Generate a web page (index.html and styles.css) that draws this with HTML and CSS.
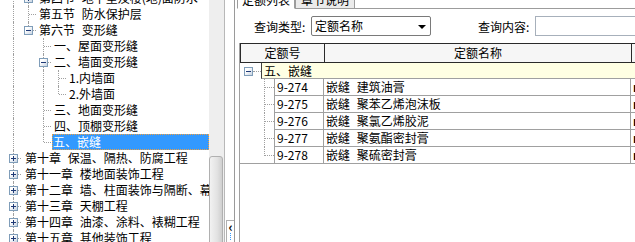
FILE: index.html
```html
<!DOCTYPE html>
<html lang="zh-CN">
<head>
    <meta charset="UTF-8">
    <title>定额库</title>
    <link rel="stylesheet" href="styles.css">
</head>
<body>
    <div class="app">
        <!-- chapter tree -->
        <div class="tree">
            <div class="tree-body">
                <div class="node"><i class="g line"></i><i class="g tee"><b class="box plus"></b></i><span class="label">第四节 地下室及楼(地)面防水</span></div>
                <div class="node"><i class="g line"></i><i class="g tee"></i><span class="label">第五节 防水保护层</span></div>
                <div class="node"><i class="g line"></i><i class="g elbow"><b class="box"></b></i><span class="label">第六节 变形缝</span></div>
                <div class="node"><i class="g line"></i><i class="g"></i><i class="g tee"></i><span class="label">一、屋面变形缝</span></div>
                <div class="node"><i class="g line"></i><i class="g"></i><i class="g tee"><b class="box"></b></i><span class="label">二、墙面变形缝</span></div>
                <div class="node"><i class="g line"></i><i class="g"></i><i class="g line"></i><i class="g tee"></i><span class="label">1.内墙面</span></div>
                <div class="node"><i class="g line"></i><i class="g"></i><i class="g line"></i><i class="g elbow"></i><span class="label">2.外墙面</span></div>
                <div class="node"><i class="g line"></i><i class="g"></i><i class="g tee"></i><span class="label">三、地面变形缝</span></div>
                <div class="node"><i class="g line"></i><i class="g"></i><i class="g tee"></i><span class="label">四、顶棚变形缝</span></div>
                <div class="node"><i class="g line"></i><i class="g"></i><i class="g elbow"></i><span class="label selected">五、嵌缝</span></div>
                <div class="node"><i class="g tee"><b class="box plus"></b></i><span class="label top">第十章 保温、隔热、防腐工程</span></div>
                <div class="node"><i class="g tee"><b class="box plus"></b></i><span class="label top">第十一章 楼地面装饰工程</span></div>
                <div class="node"><i class="g tee"><b class="box plus"></b></i><span class="label top">第十二章 墙、柱面装饰与隔断、幕墙工程</span></div>
                <div class="node"><i class="g tee"><b class="box plus"></b></i><span class="label top">第十三章 天棚工程</span></div>
                <div class="node"><i class="g tee"><b class="box plus"></b></i><span class="label top">第十四章 油漆、涂料、裱糊工程</span></div>
                <div class="node"><i class="g tee"><b class="box plus"></b></i><span class="label top">第十五章 其他装饰工程</span></div>
            </div>
        </div>
        <div class="vscroll"><div class="thumb"></div></div>
        <div class="splitter">
            <div class="collapse"><span class="chev">&lsaquo;</span><span class="dots"></span></div>
        </div>

        <!-- quota list -->
        <div class="main">
            <div class="tabs">
                <div class="tab active">定额列表</div>
                <div class="tab">章节说明</div>
                <div class="tab-rest"></div>
            </div>

            <div class="query">
                <span class="q-label">查询类型:</span>
                <div class="select">定额名称<span class="arrow"></span></div>
                <span class="q-label q-second">查询内容:</span>
                <div class="text-box"></div>
            </div>

            <div class="grid">
                <div class="grid-head">
                    <div class="h-cell h-code">定额号</div>
                    <div class="h-cell h-name">定额名称</div>
                    <div class="h-cell h-unit"></div>
                </div>
                <div class="group-row">
                    <div class="group-tree"><b class="box"></b><i class="stub"></i></div>
                    <div class="group-title">五、嵌缝</div>
                </div>
                <div class="row"><i class="r-tree tee"></i><div class="cell code">9-274</div><div class="cell name">嵌缝 建筑油膏</div><div class="cell unit">m</div></div>
                <div class="row"><i class="r-tree tee"></i><div class="cell code">9-275</div><div class="cell name">嵌缝 聚苯乙烯泡沫板</div><div class="cell unit">m</div></div>
                <div class="row"><i class="r-tree tee"></i><div class="cell code">9-276</div><div class="cell name">嵌缝 聚氯乙烯胶泥</div><div class="cell unit">m</div></div>
                <div class="row"><i class="r-tree tee"></i><div class="cell code">9-277</div><div class="cell name">嵌缝 聚氨酯密封膏</div><div class="cell unit">m</div></div>
                <div class="row"><i class="r-tree elbow"></i><div class="cell code">9-278</div><div class="cell name">嵌缝 聚硫密封膏</div><div class="cell unit">m</div></div>
                <div class="grid-end"></div>
            </div>
        </div>
    </div>
</body>
</html>
```

FILE: styles.css
```css
body {
    margin: 0;
    background: #ffffff;
    font-family: "Noto Sans CJK SC", "Liberation Sans", sans-serif;
    font-size: 12px;
    word-spacing: 4px;
    color: #000;
}

.app {
    display: flex;
    width: 635px;
    height: 242px;
    overflow: hidden;
}

/* ---------- tree ---------- */

.tree {
    width: 209px;
    flex: none;
    overflow: hidden;
}

.tree-body {
    margin-top: -10px; /* list is scrolled a little */
}

.node {
    display: flex;
    height: 16px;
    line-height: 16px;
    padding-left: 6px;
    white-space: nowrap;
}

.g {
    position: relative;
    width: 15px;
    height: 16px;
    flex: none;
    display: flex;
    align-items: center;
    justify-content: center;
}

.g.line::before, .g.tee::before, .g.elbow::before {
    content: "";
    position: absolute;
    left: 7px;
    top: 0;
    bottom: 0;
    border-left: 1px dotted #a0a0a0;
}

.g.elbow::before {
    bottom: 8px;
}

.g.tee::after, .g.elbow::after {
    content: "";
    position: absolute;
    left: 8px;
    right: 0;
    top: 8px;
    border-top: 1px dotted #a0a0a0;
}

.box {
    position: relative;
    z-index: 1;
    width: 7px;
    height: 7px;
    border: 1px solid #7f9db9;
    background: linear-gradient(135deg, #ffffff 30%, #c8d4e2);
}

.box::before {
    content: "";
    position: absolute;
    left: 1px;
    top: 3px;
    width: 5px;
    height: 1px;
    background: #1f3a76;
}

.box.plus::after {
    content: "";
    position: absolute;
    left: 3px;
    top: 1px;
    width: 1px;
    height: 5px;
    background: #1f3a76;
}

.label {
    margin-left: 2px;
    padding: 0 1px;
}

.label.top {
    margin-left: 3px;
}

.label.selected {
    flex: 1;
    margin-left: 1px;
    padding-left: 1px;
    background: #3399ff;
    color: #fff;
    outline: 1px dotted #f0a040;
    outline-offset: -1px;
}

/* ---------- scrollbar + splitter ---------- */

.vscroll {
    width: 16px;
    flex: none;
    background: #eeeeee;
    border-right: 1px solid #b8b8b8;
    box-sizing: border-box;
    display: flex;
    flex-direction: column;
    justify-content: flex-end;
}

.thumb {
    height: 88px;
    margin: 0 1px -4px 0;
    border: 1px solid #b0b0b0;
    border-radius: 3px 3px 0 0;
    background: linear-gradient(90deg, #f2f2f2, #e2e2e2 60%, #cfcfcf);
}

.splitter {
    width: 9px;
    flex: none;
    border-right: 1px solid #9a9a9a;
    display: flex;
    flex-direction: column;
    justify-content: flex-end;
}

.collapse {
    height: 22px;
    margin: 0 0 -2px 1px;
    border: 1px solid #b0b0b0;
    border-right: none;
    background: #fff;
    display: flex;
    flex-direction: column;
    align-items: center;
}

.chev {
    font-size: 13px;
    line-height: 12px;
    font-weight: bold;
}

.dots {
    width: 1px;
    height: 7px;
    border-left: 1px dotted #3399ff;
}

/* ---------- right side ---------- */

.main {
    flex: 1;
    min-width: 0;
    display: flex;
    flex-direction: column;
}

.tabs {
    display: flex;
    margin-top: -8px;
    height: 17px;
}

.tab {
    height: 16px;
    line-height: 16px;
    padding: 0 5px;
    border: 1px solid #9c9c9c;
    border-top: none;
    background: #ebebeb;
}

.tab.active {
    margin-left: 2px;
    padding: 0 4px;
    background: #fff;
    border-bottom-color: #fff;
}

.tab-rest {
    flex: 1;
    border-bottom: 1px solid #9c9c9c;
}

.query {
    display: flex;
    align-items: center;
    height: 20px;
    margin-top: 7px;
    padding-left: 19px;
    white-space: nowrap;
}

.q-label {
    width: 57px;
}

.q-second {
    margin-left: 47px;
}

.select {
    position: relative;
    padding-left: 3px;
    box-sizing: border-box;
    width: 120px;
    height: 20px;
    line-height: 18px;
    border: 1px solid #7a7a7a;
    border-radius: 2px;
}

.arrow {
    position: absolute;
    right: 4px;
    top: 8px;
    border: 4px solid transparent;
    border-top: 4px solid #000;
    border-bottom: none;
}

.text-box {
    flex: 1;
    height: 20px;
    box-sizing: border-box;
    border: 1px solid #a7b0bb;
    border-right: none;
}

/* ---------- grid ---------- */

.grid {
    margin: 7px 0 0 4px;
    flex: 1;
    border-left: 1px solid #a0a0a0;
}

.grid-head {
    display: flex;
    height: 20px;
    border-top: 1px solid #2a2a2a;
    border-bottom: 1px solid #2a2a2a;
    background: #f6f6f6;
    box-sizing: border-box;
}

.h-cell {
    line-height: 18px;
    text-align: center;
    border-left: 1px solid #2a2a2a;
}

.h-code {
    width: 83px;
}

.h-name {
    width: 306px;
}

.h-unit {
    flex: 1;
}

.group-row {
    display: flex;
    height: 16px;
    line-height: 15px;
}

.group-tree {
    width: 17px;
    display: flex;
    align-items: center;
    padding-left: 4px;
    flex: none;
}

.group-tree .stub {
    flex: 1;
    border-top: 1px dotted #a0a0a0;
}

.group-title {
    flex: 1;
    padding-left: 2px;
    background: #ffffe3;
    border-left: 1px solid #404040;
    border-bottom: 1px solid #a0a0a0;
}

.row {
    display: flex;
    height: 17px;
    line-height: 16px;
}

.r-tree {
    position: relative;
    width: 34px;
    flex: none;
}

.r-tree::before {
    content: "";
    position: absolute;
    left: 24px;
    top: 0;
    bottom: 0;
    border-left: 1px dotted #a0a0a0;
}

.r-tree.elbow::before {
    bottom: 8px;
}

.r-tree::after {
    content: "";
    position: absolute;
    left: 25px;
    right: 0;
    top: 8px;
    border-top: 1px dotted #a0a0a0;
}

.cell {
    border-left: 1px solid #a0a0a0;
    border-bottom: 1px solid #a0a0a0;
    padding-left: 2px;
    white-space: nowrap;
    overflow: hidden;
}

.code {
    width: 46px;
}

.name {
    width: 304px;
}

.unit {
    flex: 1;
    font-weight: bold;
}

.grid-end {
    border-top: 1px solid #a0a0a0;
    margin-top: -1px;
}
```
